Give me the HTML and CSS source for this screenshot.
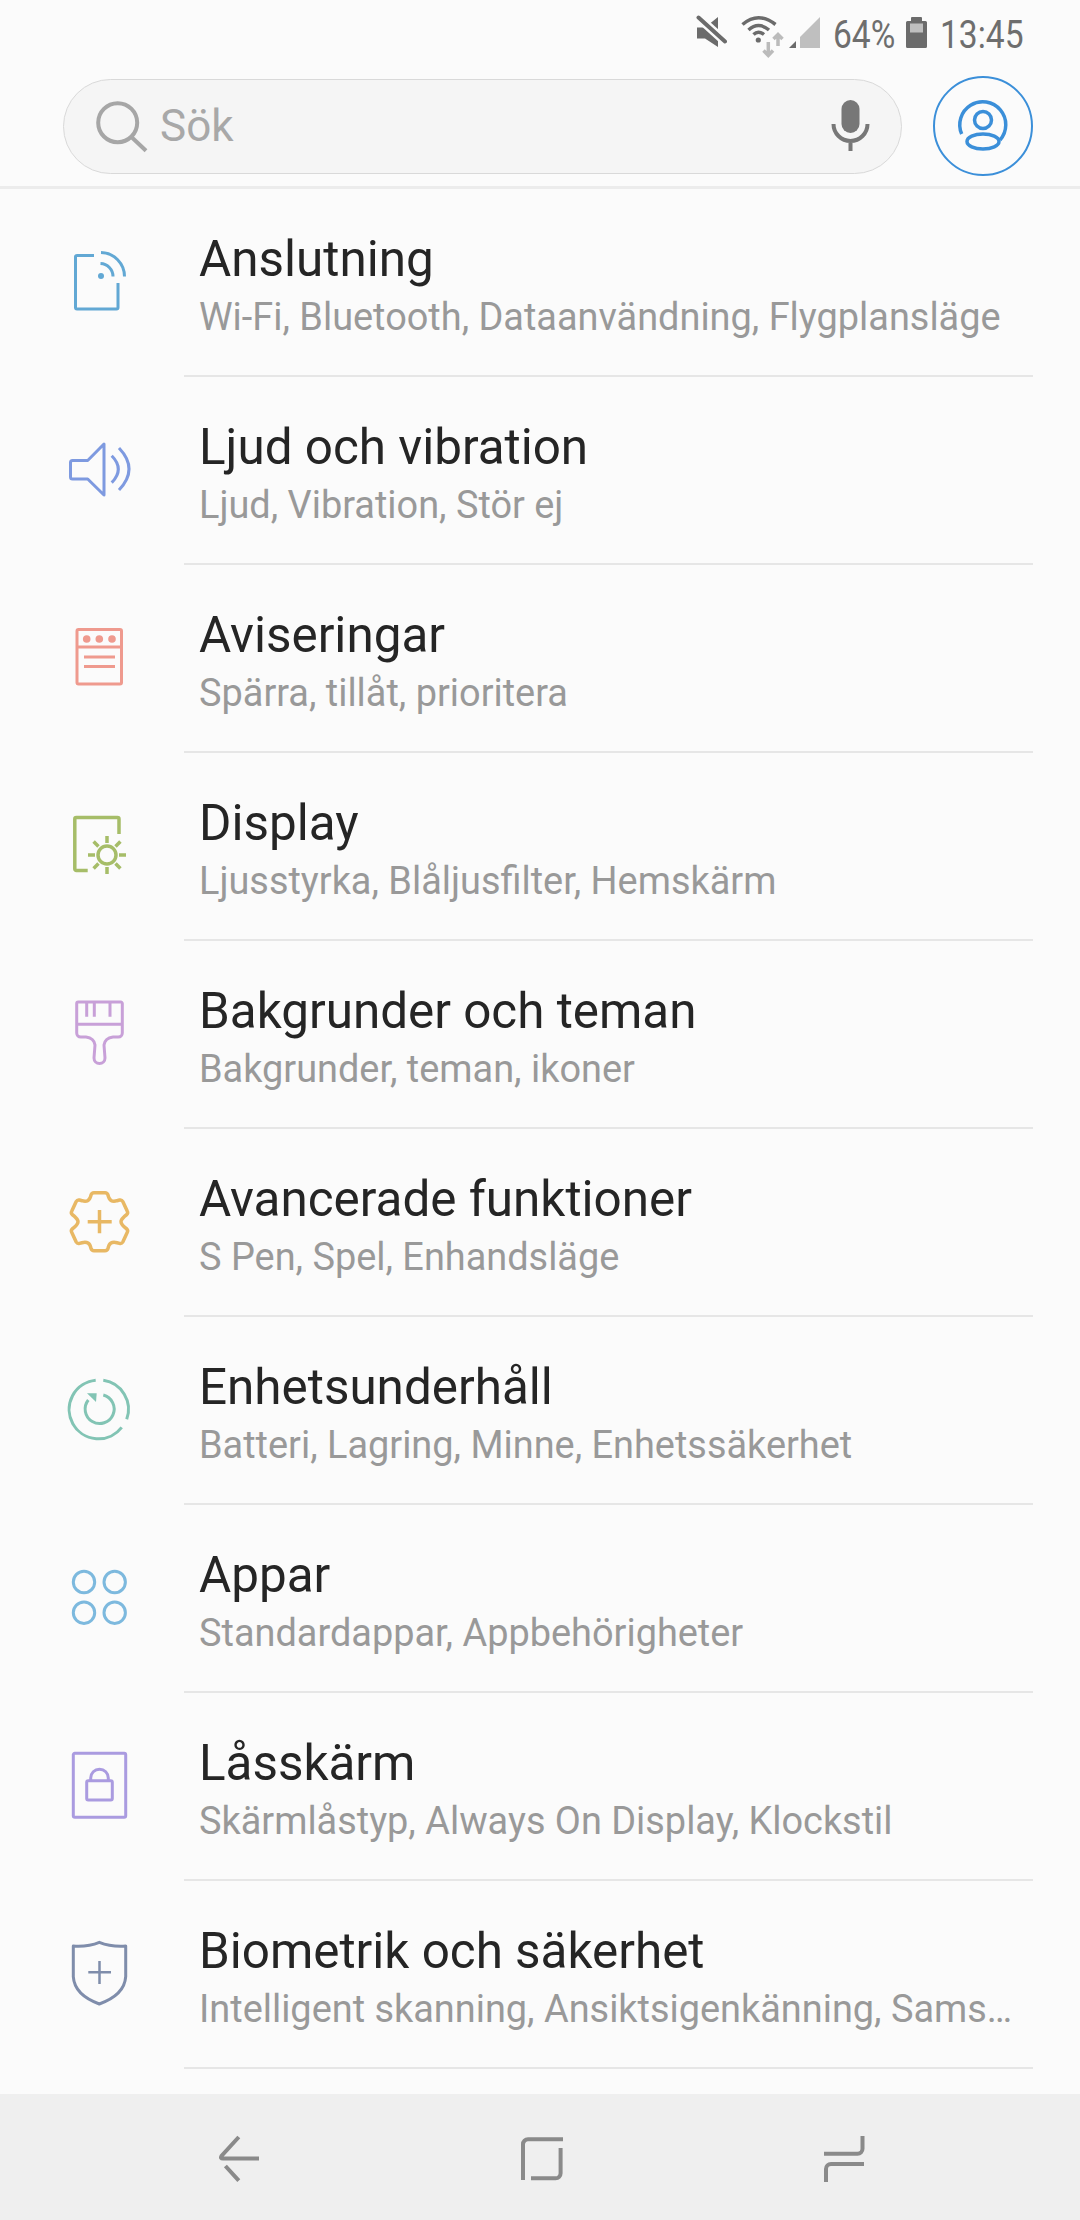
FILE: index.html
```html
<!DOCTYPE html>
<html lang="sv">
<head>
<meta charset="utf-8">
<title>Inställningar</title>
<link rel="stylesheet" href="styles.css">
</head>
<body>
<div class="screen">
  <header class="header">
    <div class="status">
      <svg class="st-mute" width="31" height="36" viewBox="0 0 31 36">
        <path class="fill-dark" d="M1 13.500H9L22 3V33L9 24.500H1Z"/>
        <path class="cut" d="M2.500 3.500L29 27.500"/>
        <path class="slash" d="M2.500 3.500L29 27.500"/>
      </svg>
      <svg class="st-net" width="80" height="36" viewBox="0 0 80 36">
        <g class="wifi">
          <path d="M2.500 10.500Q18.300 -3 35.500 10.500"/>
          <path d="M8.500 16Q18.300 7 29 16"/>
          <path d="M13.500 20.500Q18.300 16 24 20.500"/>
        </g>
        <circle class="fill-dark" cx="18.300" cy="26" r="2.600"/>
        <path class="arrow" d="M28.300 28V41M23.500 36.500L28.300 41.500L33 36.500"/>
        <path class="arrow" d="M38 32V20.500M33.500 25L38 20.500L42.500 25"/>
        <path class="fill-dark" d="M49 34L56 27V34Z"/>
        <path class="fill-light" d="M60 34V23L80 3V34Z"/>
      </svg>
      <span class="st-text st-pct">64%</span>
      <svg class="st-bat" width="21" height="36" viewBox="0 0 21 36">
        <path class="fill-dark" d="M5 4a1 1 0 0 1 1-1H15a1 1 0 0 1 1 1V7H19.500a1.500 1.500 0 0 1 1.500 1.500V32.500a1.500 1.500 0 0 1-1.500 1.500H1.500A1.500 1.500 0 0 1 0 32.500V8.500A1.500 1.500 0 0 1 1.500 7H5Z"/>
        <rect class="fill-light" x="4" y="9.500" width="13" height="9"/>
      </svg>
      <span class="st-text st-time">13:45</span>
    </div>
    <div class="toolbar">
      <div class="search">
        <svg class="search-ico" width="60" height="60" viewBox="0 0 60 60">
          <circle cx="24.700" cy="26.700" r="19.500"/>
          <path d="M38.700 41.300L53 54.700"/>
        </svg>
        <span class="search-text">Sök</span>
        <svg class="mic" width="44" height="60" viewBox="0 0 44 60">
          <rect class="mic-body" x="12.500" y="4" width="18" height="33" rx="9"/>
          <path d="M4.500 28a17 17 0 0 0 34 0M21.500 45V55"/>
        </svg>
      </div>
      <svg class="profile" width="100" height="100" viewBox="0 0 100 100">
        <circle class="ring" cx="50" cy="50" r="49"/>
        <g class="person">
          <path d="M28.700 58A23 23 0 1 1 67 64"/>
          <circle cx="50" cy="44" r="8.500"/>
          <ellipse cx="50" cy="65.500" rx="16" ry="7.500"/>
        </g>
      </svg>
    </div>
  </header>

  <main class="list">
    <div class="row">
      <svg class="ico c-blue" viewBox="0 0 72 72">
        <path d="M30 9.500H13a1.500 1.500 0 0 0-1.500 1.500V61.500a1.500 1.500 0 0 0 1.500 1.500H52.500a1.500 1.500 0 0 0 1.500-1.500V37"/>
        <path d="M36.500 17.500A13 13 0 0 1 49 30.500M37 6.500A24 24 0 0 1 60.500 30.500"/>
        <circle class="solid" cx="37" cy="30" r="3"/>
      </svg>
      <div class="body"><div class="title">Anslutning</div><div class="sub">Wi-Fi, Bluetooth, Dataanvändning, Flygplansläge</div></div>
    </div>
    <div class="row">
      <svg class="ico c-indigo" viewBox="0 0 72 72">
        <path d="M40 10V61L23.700 45H8.500a2 2 0 0 1-2-2V28.500a2 2 0 0 1 2-2H23.700Z"/>
        <path d="M47.700 21.800Q60.900 35.200 47.700 48.600M55 14Q75 35 55 56"/>
      </svg>
      <div class="body"><div class="title">Ljud och vibration</div><div class="sub">Ljud, Vibration, Stör ej</div></div>
    </div>
    <div class="row">
      <svg class="ico c-red" viewBox="0 0 72 72">
        <rect x="13" y="7.500" width="44.500" height="54.500" rx="1.500"/>
        <path d="M13 25H57.500M20 35H51M20 44.600H51"/>
        <circle class="solid" cx="22.700" cy="17" r="3.800"/>
        <circle class="solid" cx="35.300" cy="17" r="3.800"/>
        <circle class="solid" cx="48" cy="17" r="3.800"/>
      </svg>
      <div class="body"><div class="title">Aviseringar</div><div class="sub">Spärra, tillåt, prioritera</div></div>
    </div>
    <div class="row">
      <svg class="ico c-green" viewBox="0 0 72 72">
        <path d="M23.700 60.500H12.300a1.500 1.500 0 0 1-1.500-1.500V9a1.500 1.500 0 0 1 1.500-1.500H53.500a1.500 1.500 0 0 1 1.500 1.500V24"/>
        <circle cx="43" cy="45" r="9"/>
        <path d="M43 33V26M43 57V64M31 45H24M55 45H62M34.500 36.500L29.600 31.600M51.500 36.500L56.400 31.600M34.500 53.500L29.600 58.400M51.500 53.500L56.400 58.400"/>
      </svg>
      <div class="body"><div class="title">Display</div><div class="sub">Ljusstyrka, Blåljusfilter, Hemskärm</div></div>
    </div>
    <div class="row">
      <svg class="ico c-purple" viewBox="0 0 72 72">
        <path d="M14.200 4H56.800a1.500 1.500 0 0 1 1.500 1.500V35a4 4 0 0 1-4 4H49Q41 40 40 47L41 60a5.500 5.500 0 0 1-11 0L31 47Q30 40 22 39H16.700a4 4 0 0 1-4-4V5.500A1.500 1.500 0 0 1 14.200 4Z"/>
        <path d="M12.700 26.300H58.300M22.700 4V18.700M30.300 4V18.700M46 4V18.700"/>
      </svg>
      <div class="body"><div class="title">Bakgrunder och teman</div><div class="sub">Bakgrunder, teman, ikoner</div></div>
    </div>
    <div class="row">
      <svg class="ico c-orange" viewBox="0 0 72 72">
        <path d="M30 6.700H41Q43.300 6.700 44 9Q45.500 17 53 14.700L55.500 14Q57.700 13.500 58.800 15.500L63.200 25Q64.300 27 62.800 28.500Q57 33 57 35.700Q57 38.500 62.800 43Q64.300 44.500 63.200 46.500L58.800 56Q57.700 58 55.500 57.400L53 56.700Q45.500 54.500 44 62.500Q43.300 64.700 41 64.700H30Q27.700 64.700 27 62.500Q25.500 54.500 18 56.700L15.500 57.400Q13.300 58 12.200 56L7.800 46.500Q6.700 44.500 8.200 43Q14 38.500 14 35.700Q14 33 8.200 28.500Q6.700 27 7.800 25L12.200 15.500Q13.300 13.500 15.500 14L18 14.700Q25.500 17 27 9Q27.700 6.700 30 6.700Z"/>
        <path d="M23.700 35.700H47.700M35.500 24V47.300"/>
      </svg>
      <div class="body"><div class="title">Avancerade funktioner</div><div class="sub">S Pen, Spel, Enhandsläge</div></div>
    </div>
    <div class="row">
      <svg class="ico c-teal" viewBox="0 0 72 72">
        <path d="M39.300 6.300A29.300 29.300 0 0 1 62.700 45.300M57.700 53.300A29.300 29.300 0 1 1 31.700 6.300"/>
        <path d="M39.300 21A14.500 14.500 0 1 1 24.300 26"/>
        <path class="solid" d="M23 19.300H32.700L32 28Z"/>
      </svg>
      <div class="body"><div class="title">Enhetsunderhåll</div><div class="sub">Batteri, Lagring, Minne, Enhetssäkerhet</div></div>
    </div>
    <div class="row">
      <svg class="ico c-sky" viewBox="0 0 72 72">
        <circle cx="20" cy="20" r="10.700"/>
        <circle cx="50.700" cy="20" r="10.700"/>
        <circle cx="20" cy="50.700" r="10.700"/>
        <circle cx="50.700" cy="50.700" r="10.700"/>
      </svg>
      <div class="body"><div class="title">Appar</div><div class="sub">Standardappar, Appbehörigheter</div></div>
    </div>
    <div class="row">
      <svg class="ico c-violet" viewBox="0 0 72 72">
        <rect x="9.300" y="3.300" width="52.400" height="64" rx="1.500"/>
        <rect x="22.700" y="30.700" width="25.600" height="19.300" rx="1.500"/>
        <path d="M26.700 30.700V28A8.800 8.800 0 0 1 44.300 28V30.700"/>
      </svg>
      <div class="body"><div class="title">Låsskärm</div><div class="sub">Skärmlåstyp, Always On Display, Klockstil</div></div>
    </div>
    <div class="row">
      <svg class="ico c-slate" viewBox="0 0 72 72">
        <path d="M35.300 4.300Q24 9 9.300 8V38.700Q10.500 57 35.300 66Q60.500 57 61.700 38.700V8Q47 9 35.300 4.300Z"/>
        <path class="thin" d="M24.300 34.300H47M35.500 23V46"/>
      </svg>
      <div class="body"><div class="title">Biometrik och säkerhet</div><div class="sub">Intelligent skanning, Ansiktsigenkänning, Sams…</div></div>
    </div>
  </main>

  <nav class="nav">
    <svg class="nav-ico" width="60" height="60" viewBox="0 0 60 60">
      <path d="M28.800 10L11.500 29Q10 31.500 13 31.500H49M15.400 39L28.800 53.700"/>
    </svg>
    <svg class="nav-ico" width="60" height="60" viewBox="0 0 60 60">
      <path d="M10 53V17.300a5 5 0 0 1 5-5H50M47.600 21V46.300a5 5 0 0 1-5 5H18"/>
    </svg>
    <svg class="nav-ico" width="60" height="60" viewBox="0 0 60 60">
      <path d="M47.500 9V21.700a5 5 0 0 1-5 5H9M49 37H16a5 5 0 0 0-5 5V55"/>
    </svg>
  </nav>
</div>
</body>
</html>
```
FILE: styles.css
```css
* { box-sizing: border-box; }
html, body { margin: 0; padding: 0; }
body { background: #fbfbfb; font-family: Roboto, "Liberation Sans", sans-serif; }
.screen { width: 1080px; height: 2220px; display: flex; flex-direction: column; overflow: hidden; }

.header { height: 189px; flex: none; border-bottom: 3px solid #ececec; }
.status { height: 76px; display: flex; align-items: center; justify-content: flex-end; gap: 13px; padding: 0 58px 12px 0; }
.st-text { display: inline-block; margin-top: 5px; font-size: 39px; line-height: 44px; color: #6e6e6e; white-space: nowrap; transform: scaleX(.86); transform-origin: left center; }
.st-pct { width: 60px; }
.st-time { width: 82px; }
.st-net { overflow: visible; }
.fill-dark { fill: #6b6b6b; }
.fill-light { fill: #bfbfbf; }
.cut { stroke: #fbfbfb; stroke-width: 9; fill: none; }
.slash { stroke: #6b6b6b; stroke-width: 4; stroke-linecap: round; fill: none; }
.wifi path { fill: none; stroke: #6b6b6b; stroke-width: 3.5; }
.arrow { fill: none; stroke: #bbb; stroke-width: 3.5; }

.toolbar { height: 100px; display: flex; align-items: center; gap: 31px; padding: 0 47px 0 63px; }
.search { flex: 1; height: 95px; display: flex; align-items: center; padding: 0 28px 0 29px; background: #f5f5f5; border: 1.500px solid #d9d9d9; border-radius: 48px; }
.search-ico { flex: none; fill: none; stroke: #a6a6a6; stroke-width: 4; }
.search-text { flex: 1; margin-left: 7px; font-size: 44px; color: #a8a8a8; }
.mic { flex: none; fill: none; stroke: #777; stroke-width: 4; }
.mic-body { fill: #777; stroke: none; }
.profile { flex: none; fill: none; }
.ring { stroke: #3b8fd9; stroke-width: 2; }
.person { stroke: #3b8fd9; stroke-width: 3.500; }

.list { flex: 1; min-height: 0; overflow: hidden; }
.row { height: 188px; display: flex; padding-right: 47px; }
.ico { flex: none; width: 72px; height: 72px; margin: 57px 48px 0 64px; fill: none; stroke-width: 3; stroke-linejoin: round; }
.ico .solid { stroke: none; }
.ico .thin { stroke-width: 2.500; }
.c-blue { stroke: #62a8d4; } .c-blue .solid { fill: #62a8d4; }
.c-indigo { stroke: #7e9ae0; }
.c-red { stroke: #ef9a8e; } .c-red .solid { fill: #ef9a8e; }
.c-green { stroke: #a6bd68; stroke-width: 3.500; }
.c-purple { stroke: #c8a0d8; }
.c-orange { stroke: #e8b864; stroke-width: 3.500; }
.c-teal { stroke: #82c4b4; } .c-teal .solid { fill: #82c4b4; }
.c-sky { stroke: #7db9de; }
.c-violet { stroke: #aa9be0; }
.c-slate { stroke: #7f8dab; }

.body { flex: 1; min-width: 0; padding: 42px 0 0 15px; border-bottom: 2px solid #e6e6e6; }
.title { font-size: 49.400px; line-height: 56px; color: #252525; white-space: nowrap; }
.sub { margin-top: 7px; font-size: 37.900px; line-height: 46px; color: #999; white-space: nowrap; }

.nav { flex: none; height: 126px; background: #efefef; display: flex; align-items: center; gap: 242.500px; padding-left: 210px; }
.nav-ico { flex: none; fill: none; stroke: #8a8a8a; stroke-width: 4; }
```
